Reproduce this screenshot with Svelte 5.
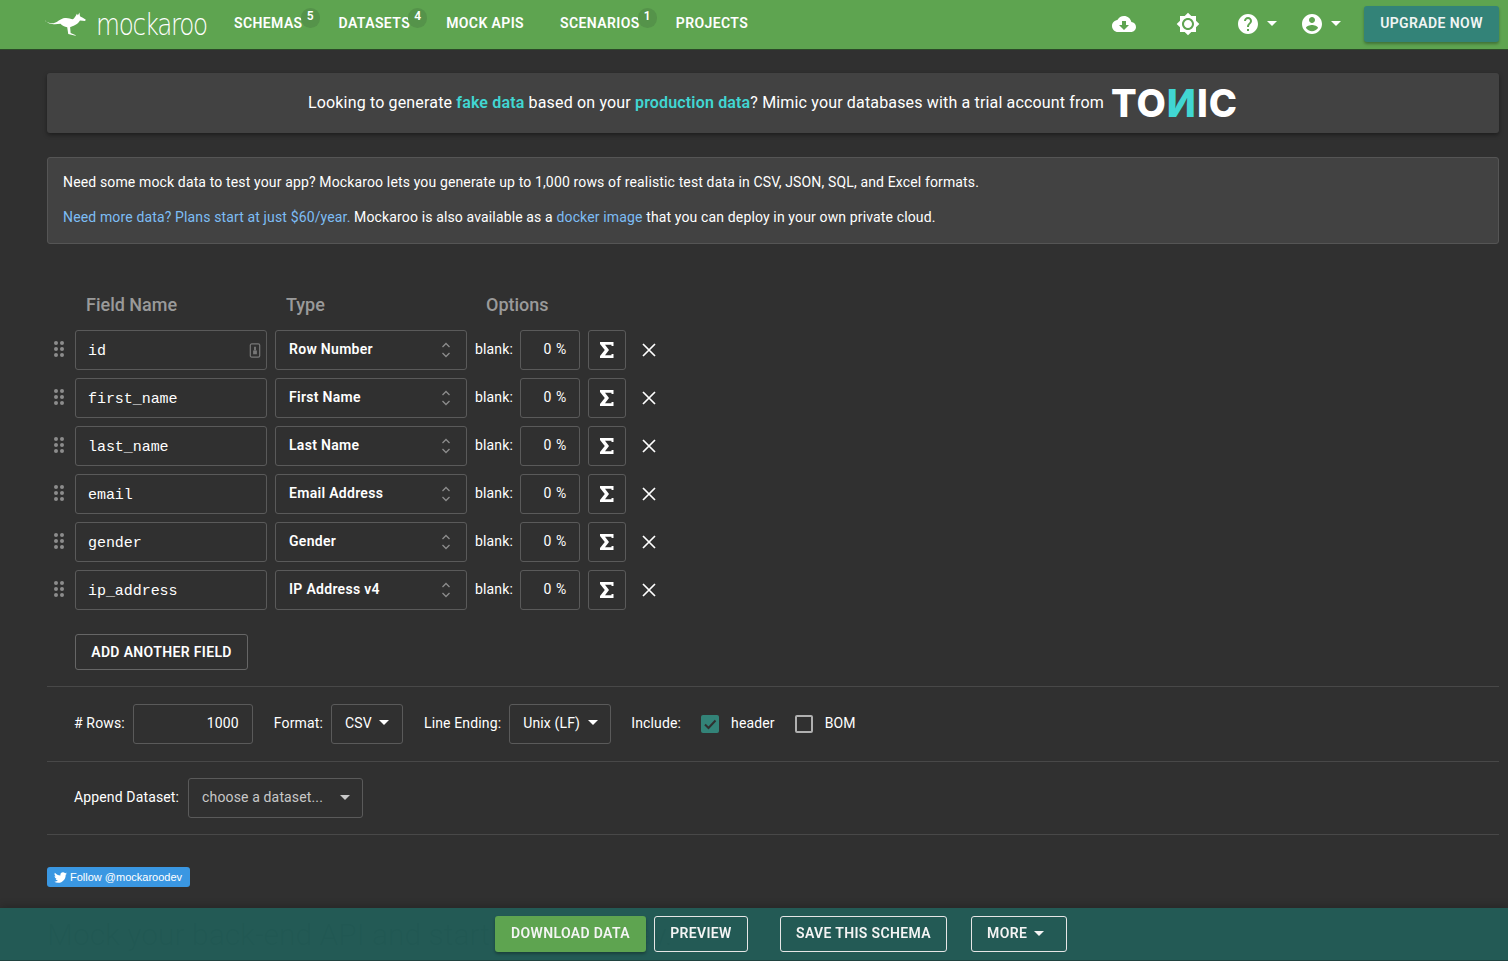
<script>
  const fields = [
    { name: 'id', type: 'Row Number', key: true },
    { name: 'first_name', type: 'First Name' },
    { name: 'last_name', type: 'Last Name' },
    { name: 'email', type: 'Email Address' },
    { name: 'gender', type: 'Gender' },
    { name: 'ip_address', type: 'IP Address v4' }
  ];
  const nav = [
    { label: 'SCHEMAS', badge: '5' },
    { label: 'DATASETS', badge: '4' },
    { label: 'MOCK APIS' },
    { label: 'SCENARIOS', badge: '1' },
    { label: 'PROJECTS' }
  ];
</script>

<div class="page">
  <header class="navbar">
    <div class="brand">
      <svg class="roo" viewBox="0 0 42 26" width="42" height="26" aria-hidden="true">
        <path fill="#fff" d="M0 10.500c3 1.600 5.500 2.600 8 2.200 3.500-.6 6.500-4.500 11-5 3-.3 5.500.6 7.500 1.300 1.500-1.200 3-3 4-5.500l1 1.500 1.500-2.500.5 3.500c1.500.8 4 2 5.500 3.200l-.5 1.300-5-.4c-1.400 2.400-3.600 4-6 5-1 .4-2.500.8-3.500 1.600l.5 5.500 5 2-.3.7-7-1.700-1-6.500c-2.500-.5-5-2-6.500-3.500-2.500.3-5 .8-8 .3-2.500-.4-5-1.600-6.700-3.500z"/>
      </svg>
      <span class="wordmark">mockaroo</span>
    </div>
    <nav class="links">
      {#each nav as item}
        <a class="link" href="#top">{item.label}{#if item.badge}<span class="badge">{item.badge}</span>{/if}</a>
      {/each}
    </nav>
    <div class="tools">
      <svg class="cloud" viewBox="0 0 24 24" width="24" height="24" aria-hidden="true"><path fill="#fff" d="M19.350 10.040C18.670 6.590 15.640 4 12 4 9.110 4 6.600 5.640 5.350 8.040 2.340 8.360 0 10.910 0 14c0 3.310 2.690 6 6 6h13c2.760 0 5-2.240 5-5 0-2.640-2.050-4.780-4.650-4.960zM17 13l-5 5-5-5h3V9h4v4h3z"/></svg>
      <svg class="sun" viewBox="0 0 24 24" width="24" height="24" aria-hidden="true"><path fill="#fff" d="M20 8.690V4h-4.690L12 .69 8.690 4H4v4.690L.69 12 4 15.310V20h4.690L12 23.310 15.310 20H20v-4.690L23.310 12 20 8.690zM12 18c-3.310 0-6-2.690-6-6s2.690-6 6-6 6 2.690 6 6-2.690 6-6 6zm0-10c-2.210 0-4 1.790-4 4s1.790 4 4 4 4-1.790 4-4-1.790-4-4-4z"/></svg>
      <span class="menu help">
        <svg viewBox="0 0 24 24" width="24" height="24" aria-hidden="true"><path fill="#fff" d="M12 2C6.480 2 2 6.480 2 12s4.480 10 10 10 10-4.480 10-10S17.520 2 12 2zm1 17h-2v-2h2v2zm2.070-7.750l-.9.920C13.450 12.900 13 13.500 13 15h-2v-.5c0-1.100.45-2.100 1.170-2.830l1.240-1.260c.37-.36.590-.86.590-1.410 0-1.100-.9-2-2-2s-2 .9-2 2H8c0-2.210 1.790-4 4-4s4 1.790 4 4c0 .88-.36 1.680-.93 2.250z"/></svg>
        <i class="caret"></i>
      </span>
      <span class="menu user">
        <svg viewBox="0 0 24 24" width="24" height="24" aria-hidden="true"><path fill="#fff" d="M12 2C6.480 2 2 6.480 2 12s4.480 10 10 10 10-4.480 10-10S17.520 2 12 2zm0 3c1.660 0 3 1.340 3 3s-1.340 3-3 3-3-1.340-3-3 1.340-3 3-3zm0 14.200c-2.500 0-4.710-1.280-6-3.220.03-1.990 4-3.080 6-3.080s5.970 1.090 6 3.080c-1.290 1.940-3.500 3.220-6 3.220z"/></svg>
        <i class="caret"></i>
      </span>
      <button class="upgrade">UPGRADE NOW</button>
    </div>
  </header>

  <main class="content">
    <section class="promo">
      <span>Looking to generate <b>fake data</b> based on your <b>production data</b>? Mimic your databases with a trial account from</span>
      <span class="tonic">TO<span class="tonic-n">И</span>IC</span>
    </section>

    <section class="notice">
      <p>Need some mock data to test your app? Mockaroo lets you generate up to 1,000 rows of realistic test data in CSV, JSON, SQL, and Excel formats.</p>
      <p><a href="#top">Need more data? Plans start at just $60/year.</a> Mockaroo is also available as a <a href="#top">docker image</a> that you can deploy in your own private cloud.</p>
    </section>

    <section class="schema">
      <div class="heads">
        <span class="h-name">Field Name</span>
        <span class="h-type">Type</span>
        <span>Options</span>
      </div>
      {#each fields as f}
        <div class="row">
          <svg class="grip" viewBox="0 0 10 16" width="10" height="16" aria-hidden="true">
            {#each [2, 8, 14] as y}
              <circle cx="2" cy={y} r="2" fill="#8c8c8c"/><circle cx="8" cy={y} r="2" fill="#8c8c8c"/>
            {/each}
          </svg>
          <div class="box name">
            <span>{f.name}</span>
            {#if f.key}
              <svg class="keyicon" viewBox="0 0 12 16" width="12" height="15" aria-hidden="true">
                <rect x="1" y="1" width="10" height="14" rx="1.500" fill="none" stroke="#777" stroke-width="1.300"/>
                <rect x="4" y="8" width="4" height="4" fill="#777"/><rect x="5" y="4" width="2" height="4" fill="#777"/>
              </svg>
            {/if}
          </div>
          <div class="box type">
            <span>{f.type}</span>
            <svg viewBox="0 0 10 18" width="10" height="18" aria-hidden="true"><path d="M1.500 6L5 2.500 8.500 6M1.500 12L5 15.500 8.500 12" fill="none" stroke="#8c8c8c" stroke-width="1.300"/></svg>
          </div>
          <span class="lbl">blank:</span>
          <div class="box pct">0 %</div>
          <div class="box sigma">
            <svg viewBox="0 0 14 16" width="14" height="16" aria-hidden="true"><path fill="#fff" d="M0 0h13.500v4h-2V2.800H5L9 8l-4 5.200h6.500V12h2v4H0v-2l4.800-6L0 2z"/></svg>
          </div>
          <svg class="remove" viewBox="0 0 14 14" width="14" height="14" aria-hidden="true"><path d="M1 1l12 12M13 1L1 13" stroke="#fff" stroke-width="1.700"/></svg>
        </div>
      {/each}
      <button class="add">ADD ANOTHER FIELD</button>
    </section>

    <section class="optrow rows">
      <label class="lbl" for="rows"># Rows:</label>
      <div id="rows" class="box rowcount">1000</div>
      <span class="lbl fmt">Format:</span>
      <div class="box drop csv">CSV <i class="caret"></i></div>
      <span class="lbl fmt">Line Ending:</span>
      <div class="box drop unix">Unix (LF) <i class="caret"></i></div>
      <span class="lbl inc">Include:</span>
      <span class="check on">
        <svg viewBox="0 0 18 18" width="18" height="18" aria-hidden="true"><path d="M4 9.500l3.500 3.500L14.500 5.500" fill="none" stroke="#303030" stroke-width="2"/></svg>
      </span>
      <span class="lbl chk">header</span>
      <span class="check"></span>
      <span class="lbl chk">BOM</span>
    </section>

    <section class="optrow append">
      <span class="lbl">Append Dataset:</span>
      <div class="box drop dataset">choose a dataset... <i class="caret"></i></div>
    </section>

    <a class="tw" href="#top">
      <svg viewBox="0 0 24 24" width="13" height="13" aria-hidden="true"><path fill="#fff" d="M23.950 4.570a10 10 0 0 1-2.820.78 4.960 4.960 0 0 0 2.160-2.720c-.95.550-2 .950-3.130 1.180a4.920 4.920 0 0 0-8.380 4.480C7.690 8.090 4.070 6.130 1.640 3.160a4.820 4.820 0 0 0-.67 2.480c0 1.710.87 3.210 2.190 4.100a4.900 4.900 0 0 1-2.230-.62v.06a4.920 4.920 0 0 0 3.950 4.830 4.900 4.900 0 0 1-2.210.08 4.940 4.940 0 0 0 4.600 3.420A9.870 9.870 0 0 1 0 19.540a13.940 13.940 0 0 0 7.550 2.210c9.050 0 14-7.500 14-13.990 0-.21 0-.42-.01-.63a10 10 0 0 0 2.410-2.560z"/></svg>
      Follow @mockaroodev
    </a>

    <h2 class="ghost">Mock your back-end API and start coding today.</h2>
  </main>

  <footer class="actions">
    <button class="solid">DOWNLOAD DATA</button>
    <button class="outline preview">PREVIEW</button>
    <button class="outline save">SAVE THIS SCHEMA</button>
    <button class="outline more">MORE <i class="caret"></i></button>
  </footer>
</div>

<style>
  :global(body) { margin: 0; background: #303030; overflow: hidden; }
  .page { height: 961px; overflow: hidden; font: 14px/20px Roboto, sans-serif; letter-spacing: .14px; color: #fff; background: #303030; }
  button { font-family: inherit; cursor: pointer; }

  .navbar { box-sizing: border-box; height: 50px; display: flex; align-items: center; background: #5ea450; border-bottom: 1px solid #2c4a28; padding: 0 9px 2px 47px; }
  .brand { display: flex; align-items: center; width: 187px; flex: none; }
  .roo { margin: -1px 0 0 -2px; flex: none; width: 44px; height: 27px; }
  .wordmark { margin: 2px 0 0 7px; font: 200 28px/30px "DejaVu Sans", sans-serif; letter-spacing: -1.500px; transform: scale(.88, 1.1); transform-origin: left center; white-space: nowrap; }
  .links { display: flex; margin-bottom: 2px; }
  .link { position: relative; color: #fff; text-decoration: none; font-weight: 600; font-size: 14px; letter-spacing: .4px; margin-right: 36px; white-space: nowrap; }
  .badge { position: absolute; right: -17px; top: -5px; width: 19px; height: 20px; border-radius: 10px; background: #55934a; font-size: 12px; line-height: 16px; letter-spacing: 0; text-align: center; }
  .tools { margin-left: auto; display: flex; align-items: center; }
  .cloud { margin-right: 40px; }
  .sun { margin-right: 36px; }
  .menu { display: inline-flex; align-items: center; }
  .help { margin-right: 23px; }
  .user { margin-right: 23px; }
  .caret { display: inline-block; width: 0; height: 0; margin-left: 7px; border: 5px solid transparent; border-top-color: currentColor; border-bottom: 0; vertical-align: 2px; }
  .upgrade { width: 135px; height: 36px; padding: 0 0 2px; border: 0; border-radius: 3px; background: #338378; color: #f1f5f4; font-size: 14px; font-weight: 600; letter-spacing: .4px; box-shadow: 0 2px 3px rgba(0,0,0,.3); }

  .content { padding: 23px 9px 0 47px; }
  .promo { height: 60px; display: flex; justify-content: center; align-items: center; gap: 7px; background: #424242; border-radius: 3px; font-size: 16px; letter-spacing: .16px; box-shadow: 0 2px 4px rgba(0,0,0,.4); }
  .promo b { font-weight: 600; color: #41d6d2; }
  .tonic { font: 800 38px/40px Inter, sans-serif; letter-spacing: 1px; color: #fff; }
  .tonic-n { color: #41d6d2; }
  .notice { box-sizing: border-box; height: 87px; margin-top: 24px; padding: 14px 15px; background: #424242; border: 1px solid #555; border-radius: 3px; }
  .notice p { margin: 0 0 15px; }
  .notice a { color: #7dbdf5; text-decoration: none; }

  .schema { margin-top: 49px; }
  .heads { display: flex; padding-left: 39px; height: 24px; font-size: 18px; line-height: 24px; font-weight: 500; letter-spacing: 0; color: #9a9a9a; margin-bottom: 13px; }
  .h-name, .h-type { width: 200px; }
  .row { display: flex; align-items: center; height: 40px; margin-bottom: 8px; padding-left: 7px; }
  .grip { width: 10px; flex: none; margin-right: 11px; margin-top: -2px; }
  .box { box-sizing: border-box; height: 40px; border: 1px solid #5a5a5a; border-radius: 3px; display: flex; align-items: center; flex: none; }
  .name { width: 192px; padding: 3px 12px 0; justify-content: space-between; font: 15px "Liberation Mono", monospace; letter-spacing: -.05px; }
  .keyicon { margin: -3px -7px 0 0; }
  .type { width: 192px; margin-left: 8px; padding: 0 15px 0 13px; justify-content: space-between; font-weight: 600; letter-spacing: .3px; }
  .type span { margin-top: -2px; }
  .lbl { white-space: nowrap; }
  .row .lbl { margin: -2px 7px 0 8px; }
  .pct { width: 60px; justify-content: center; padding: 0 0 2px 10px; word-spacing: 1px; }
  .sigma { width: 38px; margin-left: 8px; justify-content: center; }
  .remove { margin-left: 16px; }
  .add { display: block; box-sizing: border-box; width: 173px; height: 36px; margin: 24px 0 0 28px; padding: 0 0 1px; border: 1px solid #666; border-radius: 3px; background: transparent; color: #fff; font-size: 14px; font-weight: 600; letter-spacing: .35px; }

  .optrow { box-sizing: border-box; display: flex; align-items: center; border-bottom: 1px solid #484848; padding-left: 27px; }
  .rows { height: 76px; margin-top: 16px; border-top: 1px solid #484848; padding-bottom: 1px; }
  .rows .lbl, .append .lbl { margin-top: -2px; }
  .append { height: 73px; }
  .rowcount { width: 120px; margin-left: 8px; justify-content: flex-end; padding-right: 13px; padding-bottom: 2px; }
  .fmt { margin-left: 21px; }
  .drop { padding: 0 12px 2px 13px; margin-left: 8px; white-space: pre; }
  .drop .caret { margin-left: 4px; }
  .csv { width: 72px; }
  .unix { width: 102px; }
  .inc { margin-left: 20px; margin-right: 20px; }
  .check { box-sizing: border-box; width: 18px; height: 18px; flex: none; border: 2px solid #b0b0b0; border-radius: 2px; display: flex; align-items: center; justify-content: center; }
  .check.on { background: #338378; border: 0; }
  .chk { margin-left: 12px; margin-right: 20px; }
  .append .drop { margin-left: 9px; }
  .dataset { width: 175px; color: #c8c8c8; justify-content: space-between; }

  .tw { display: inline-flex; align-items: center; gap: 3px; box-sizing: border-box; width: 143px; height: 20px; margin-top: 32px; padding-left: 7px; background: #3a97e2; border-radius: 3px; color: #fff; text-decoration: none; font: 11px/20px "Liberation Sans", sans-serif; letter-spacing: 0; white-space: nowrap; vertical-align: top; }
  .ghost { margin: 30px 0 0; font-size: 30px; line-height: 36px; font-weight: 300; letter-spacing: 0; color: #111; white-space: nowrap; }

  .actions { position: fixed; left: 0; right: 0; bottom: 0; height: 53px; box-sizing: border-box; display: flex; align-items: center; padding: 0 0 0 495px; background: rgba(35,94,89,.92); border-bottom: 1px solid #1f4340; box-shadow: 0 -2px 8px rgba(0,0,0,.2); }
  .actions button { height: 36px; padding: 0 0 2px; border-radius: 3px; font-size: 14px; font-weight: 600; letter-spacing: .35px; color: #f4f4f4; white-space: nowrap; }
  .actions .caret { margin-left: 3px; }
  .solid { width: 151px; border: 0; background: #5ea450; box-shadow: 0 2px 3px rgba(0,0,0,.3); }
  .outline { border: 1px solid #e6e6e6; background: transparent; }
  .preview { width: 94px; margin-left: 8px; }
  .save { width: 167px; margin-left: 32px; }
  .actions .more { width: 96px; margin-left: 24px; padding-right: 7px; }
</style>
